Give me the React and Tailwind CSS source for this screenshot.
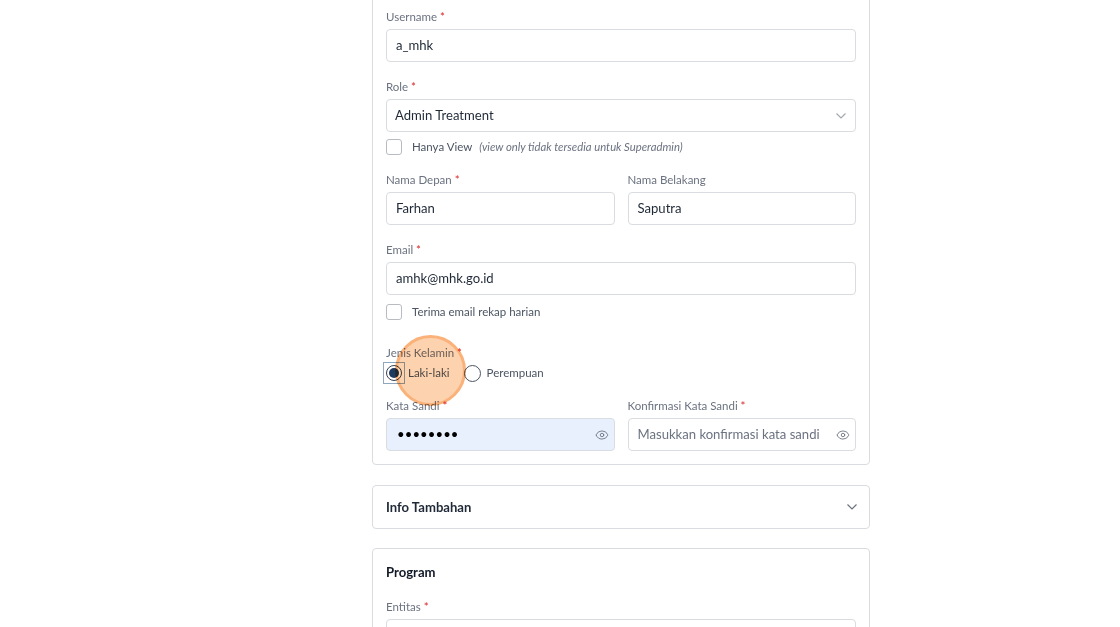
import React from "react";
import { Eye } from "lucide-react";

const Chevron = ({ className }) => (
  <svg width="10" height="6" viewBox="0 0 10 6" fill="none" stroke="currentColor" strokeWidth="1.2" className={className}>
    <path d="M.5.5 5 5 9.5.5" />
  </svg>
);

const Label = ({ children, req }) => (
  <div className="h-[18px] leading-[18px] text-[11.5px] text-[#6b7280] whitespace-nowrap">
    {children}
    {req && <span className="text-[#dc2626]"> *</span>}
  </div>
);

const Input = ({ value, placeholder, icon, filled, dots }) => (
  <div className={`mt-[3px] h-[33px] rounded-[4px] border border-[#d9dce0] flex items-center pl-[9px] pr-[5px] text-[13.1px] ${filled ? "bg-[#e8f0fe]" : "bg-white"}`}>
    <span className={`flex-1 whitespace-nowrap pt-[1px] ${placeholder ? "text-[#6b7280]" : "text-[#1f2937]"} ${dots ? "pl-[1px] tracking-[0.1px] text-black" : ""}`}>
      {value || placeholder}
    </span>
    {icon && <Eye size={14} strokeWidth={1.5} className="text-[#6b7280]" />}
  </div>
);

const Check = ({ children }) => (
  <div className="flex items-center h-[17px] text-[11.5px] text-[#4b5563] whitespace-nowrap">
    <span className="w-[16px] h-[16px] rounded-[3px] border border-[#b8bcc2] bg-white mr-[10px]" />
    <span className="flex items-center pt-[1px]">{children}</span>
  </div>
);

export default function App() {
  return (
    <div className="relative w-[1120px] h-[627px] overflow-hidden bg-white font-['Lato',sans-serif]">
      <div className="w-[498px] ml-[372px] -mt-[10px]">
        <div className="border border-[#d9dce0] rounded-[4px] px-[13px] pt-[17px] h-[475px]">
          <Label req>Username</Label>
          <Input value="a_mhk" />

          <div className="mt-[16px]"><Label req>Role</Label></div>
          <div className="mt-[3px] h-[33px] rounded-[4px] border border-[#d9dce0] flex items-center pl-[8px] pr-[9px] text-[13.1px] text-[#1f2937]">
            <span className="flex-1 pt-[1px]">Admin Treatment</span>
            <Chevron className="text-[#a3a8af]" />
          </div>
          <div className="mt-[6px]">
            <Check>
              <span>Hanya View</span>
              <span className="ml-[7px] italic text-[11.3px] text-[#6b7280]">(view only tidak tersedia untuk Superadmin)</span>
            </Check>
          </div>

          <div className="mt-[16px] grid grid-cols-2 gap-x-[13px]">
            <div><Label req>Nama Depan</Label><Input value="Farhan" /></div>
            <div><Label>Nama Belakang</Label><Input value="Saputra" /></div>
          </div>

          <div className="mt-[16px]"><Label req>Email</Label></div>
          <Input value="amhk@mhk.go.id" />
          <div className="mt-[8px]"><Check>Terima email rekap harian</Check></div>

          <div className="mt-[24px]"><Label req>Jenis Kelamin</Label></div>
          <div className="mt-[1px] h-[20px] flex items-center text-[11.5px] text-[#4b5563]">
            <span className="w-[16px] h-[16px] rounded-full border border-[#374151] bg-white flex items-center justify-center">
              <span className="w-[10px] h-[10px] rounded-full bg-[#1e3a5f]" />
            </span>
            <span className="ml-[6px]">Laki-laki</span>
            <span className="ml-[14px] w-[17px] h-[17px] rounded-full border border-[#4b5563] bg-white" />
            <span className="ml-[6px]">Perempuan</span>
          </div>

          <div className="mt-[14px] grid grid-cols-2 gap-x-[13px]">
            <div><Label req>Kata Sandi</Label><Input value="••••••••" filled dots icon /></div>
            <div><Label req>Konfirmasi Kata Sandi</Label><Input placeholder="Masukkan konfirmasi kata sandi" icon /></div>
          </div>
        </div>

        <div className="mt-[20px] h-[44px] border border-[#d9dce0] rounded-[4px] pl-[13px] pr-[12px] flex items-center justify-between">
          <span className="text-[13.1px] font-bold text-[#1f2937] pt-[2px]">Info Tambahan</span>
          <Chevron className="text-[#6b7280]" />
        </div>

        <div className="mt-[19px] border border-[#d9dce0] rounded-[4px] px-[13px] pt-[14px] h-[200px]">
          <div className="text-[13.1px] leading-[18px] font-bold text-[#111827]">Program</div>
          <div className="mt-[17px]"><Label req>Entitas</Label></div>
          <Input />
        </div>
      </div>

      <div className="absolute left-[383px] top-[362px] w-[22px] h-[22px] border border-[#8fa8bf]" />
      <div className="absolute left-[395px] top-[335px] w-[71px] h-[71px] rounded-full border-[3px] border-[#fbb27a] bg-[#fdd2ae] mix-blend-multiply" />
    </div>
  );
}
